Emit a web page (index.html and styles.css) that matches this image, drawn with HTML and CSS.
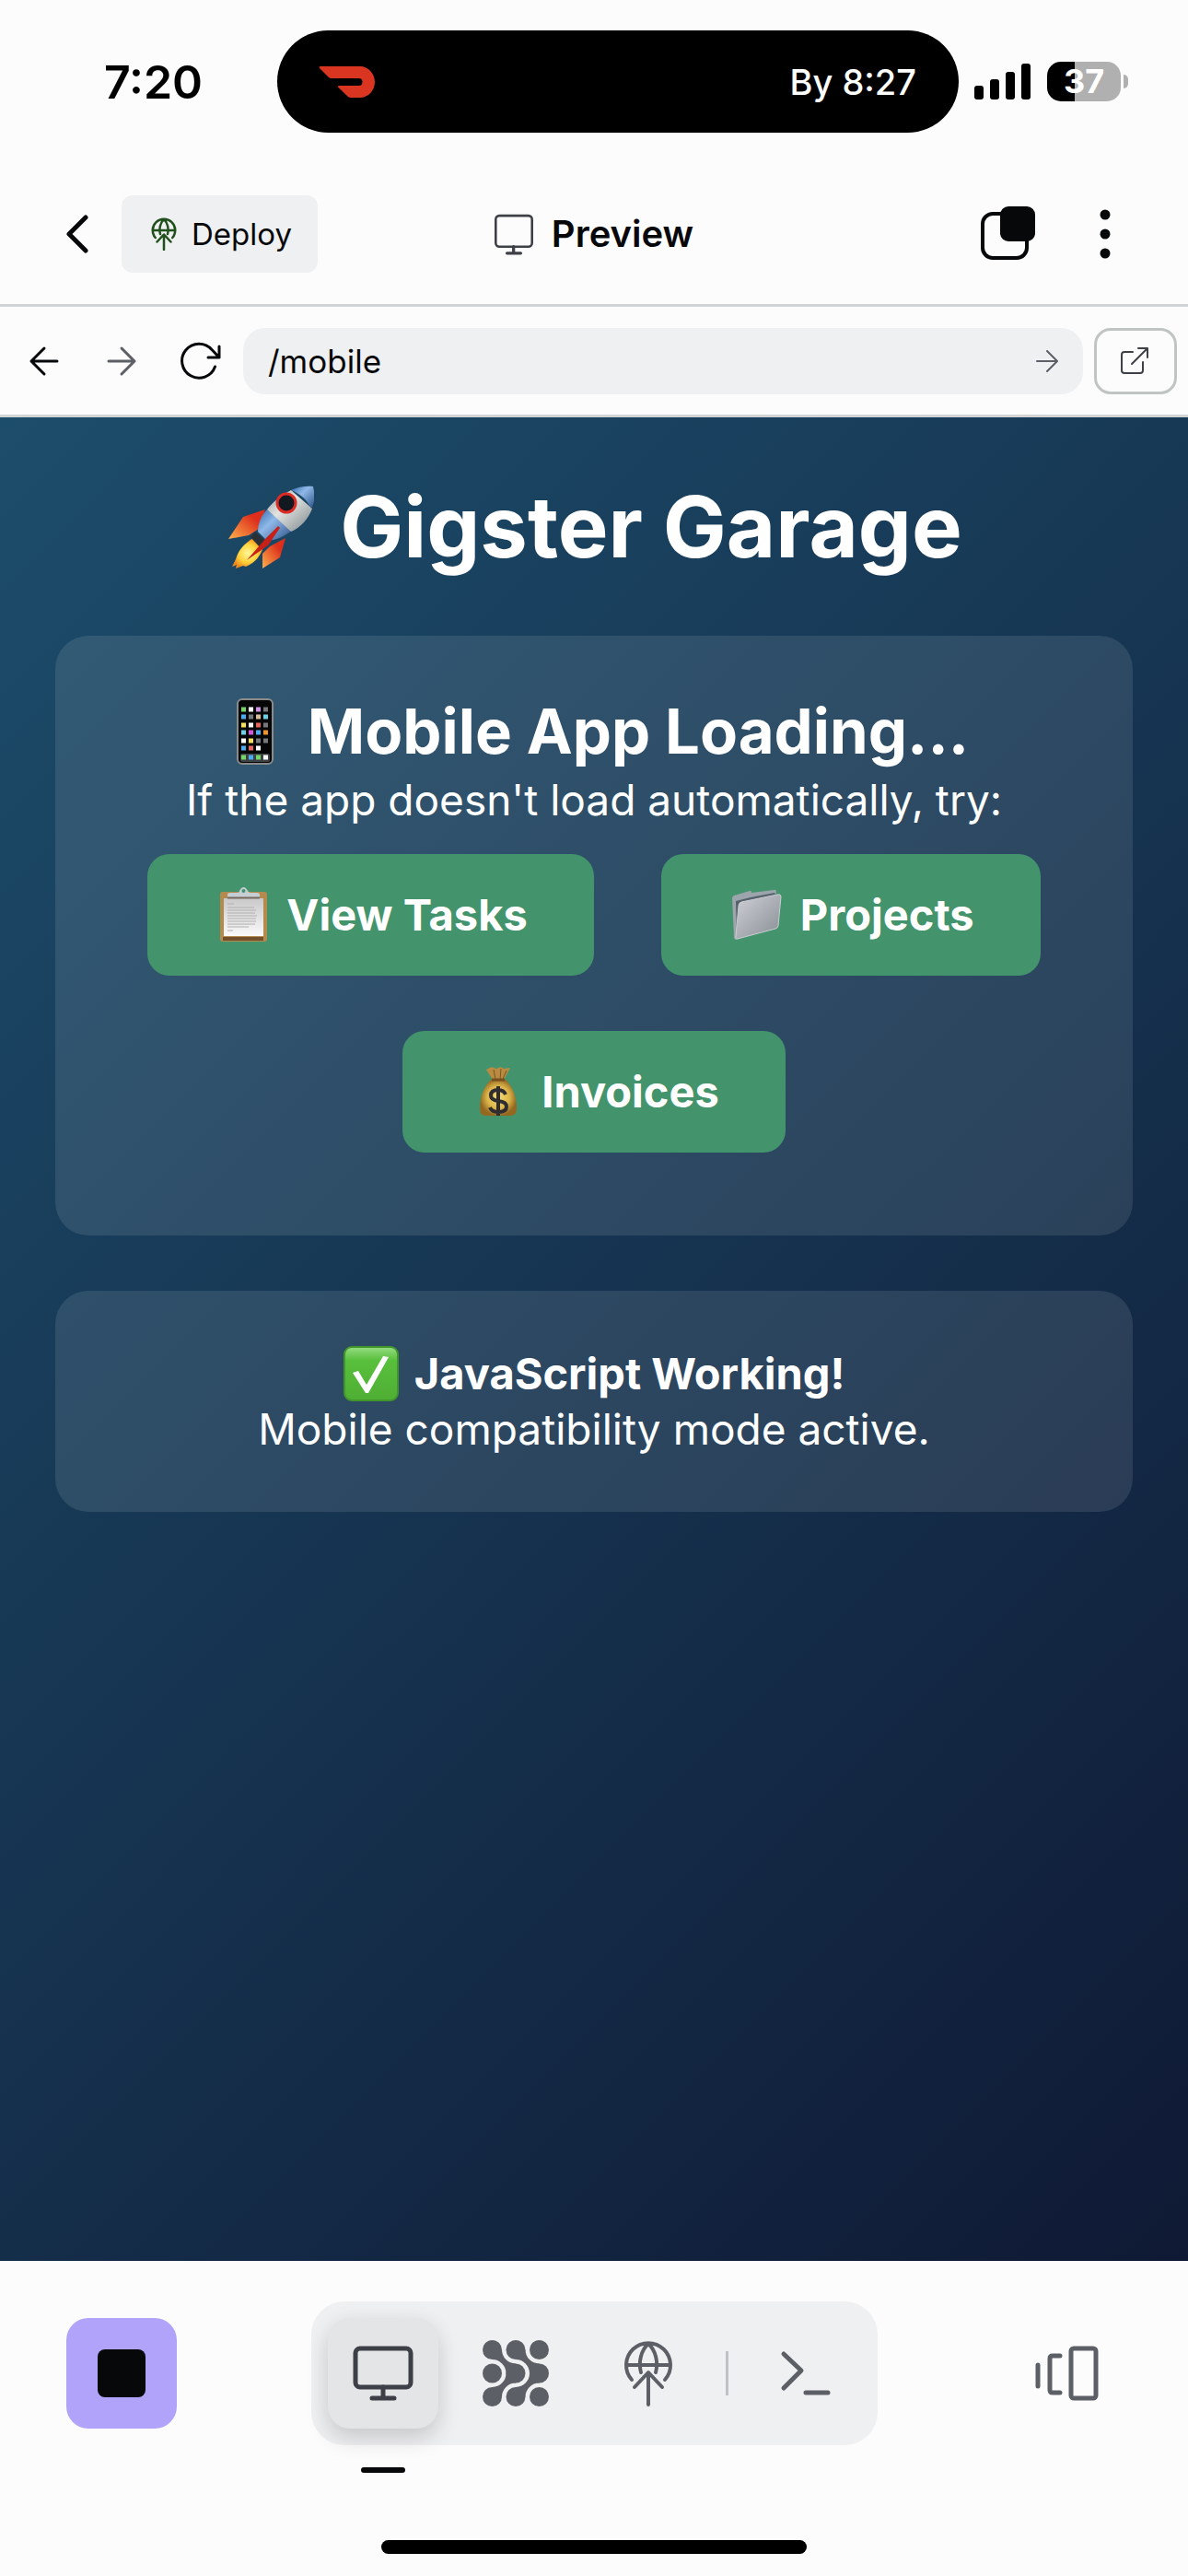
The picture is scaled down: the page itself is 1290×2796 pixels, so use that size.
FILE: index.html
```html
<!DOCTYPE html>
<html lang="en">
<head>
<meta charset="utf-8">
<meta name="viewport" content="width=device-width, initial-scale=1">
<title>Preview</title>
<link rel="stylesheet" href="styles.css">
</head>
<body>
<div class="screen">
  <div class="status">
    <time class="status-time">7:20</time>
    <div class="island">
      <svg width="62" height="34" viewBox="0 0 62 34" fill="#d93520" aria-hidden="true"><path d="M2 0H45C54 0 61 8 61 17S54 34 45 34H35Q33 34 32 33L21 22.500Q20 21 22 21H43.500A4 4 0 0 0 43.500 13H14Q12 13 11 12L1 2Q0 0 2 0Z"/></svg>
      <span>By 8:27</span>
    </div>
    <div class="status-right">
      <svg width="62" height="40" viewBox="0 0 62 40" aria-hidden="true"><rect y="24" width="10" height="15" rx="3"/><rect x="17" y="17" width="10" height="22" rx="3"/><rect x="34" y="9" width="10" height="30" rx="3"/><rect x="51" width="10" height="39" rx="3"/></svg>
      <span class="battery">37</span>
    </div>
  </div>

  <header class="topbar">
    <div class="topbar-side">
      <button class="icon-btn" aria-label="Back"><svg width="60" height="60" viewBox="0 0 60 60" class="ink"><path d="M39 12 21 30 39 48" stroke-width="5"/></svg></button>
      <button class="deploy">
        <svg width="36" height="36" viewBox="0 0 72 72" class="line green"><path d="M17.500 44A24.500 24.500 0 1 1 54.500 44M12 28H60M28 36C25 25 28 11 36 4 44 11 47 25 44 36M36 38V70M21 53 36 37 51 53" stroke-width="5"/></svg>
        Deploy
      </button>
    </div>
    <h1 class="title">
      <svg width="42" height="47" viewBox="4 0 65 72" class="line dark"><rect x="6" y="6" width="61" height="52" rx="6" stroke-width="4"/><path d="M36 58V68M25 69H48" stroke-width="5"/></svg>
      Preview
    </h1>
    <div class="topbar-side end">
      <button class="icon-btn" aria-label="Tabs"><svg width="66" height="66" viewBox="0 0 66 66" class="ink"><rect x="6" y="11" width="48" height="48" rx="11" stroke-width="4"/><rect x="25" y="3" width="38" height="38" rx="9" fill="#07080a" stroke="none"/></svg></button>
      <button class="icon-btn" aria-label="More"><svg width="60" height="60" viewBox="0 0 60 60" fill="#07080a"><circle cx="30" cy="9" r="5.500"/><circle cx="30" cy="30" r="5.500"/><circle cx="30" cy="51" r="5.500"/></svg></button>
    </div>
  </header>

  <div class="urlbar">
    <button class="icon-btn" aria-label="Go back"><svg width="36" height="36" viewBox="0 0 36 36" class="ink"><path d="M32 18H4M18 4 4 18 18 32" stroke-width="3"/></svg></button>
    <button class="icon-btn" aria-label="Go forward"><svg width="36" height="36" viewBox="0 0 36 36" class="line grey"><path d="M4 18H32M18 4 32 18 18 32" stroke-width="3"/></svg></button>
    <button class="icon-btn" aria-label="Reload"><svg width="48" height="48" viewBox="0 0 48 48" class="ink"><path d="M46 20 38 11.500A18.500 18.500 0 1 0 41.500 30M46 8V20H34" stroke-width="3"/></svg></button>
    <form class="address">
      <input type="text" value="/mobile" aria-label="Address">
      <button type="button" class="go" aria-label="Go"><svg width="24" height="28" viewBox="0 0 24 28" class="line grey"><path d="M1 14H22M12 3 23 14 12 25" stroke-width="2"/></svg></button>
    </form>
    <button class="open" aria-label="Open in new tab"><svg width="36" height="36" viewBox="0 0 36 36" class="line dark"><path d="M15 8H6Q3 8 3 11V28Q3 31 6 31H23Q26 31 26 28V19M14 21 31 4M21 4H31V14" stroke-width="2"/></svg></button>
  </div>

  <main class="preview">
    <h2 class="brand">
      <svg width="96" height="96" viewBox="-2 -3 96 96" aria-hidden="true">
        <defs>
          <linearGradient id="hull" x1="0" y1="0" x2="1" y2="1"><stop offset="0" stop-color="#8d9698"/><stop offset=".4" stop-color="#e2e4e2"/><stop offset="1" stop-color="#7b8588"/></linearGradient>
          <linearGradient id="blue" x1="0" y1="0" x2="1" y2="1"><stop offset="0" stop-color="#3469ad"/><stop offset=".4" stop-color="#8fb9e8"/><stop offset="1" stop-color="#2c4f87"/></linearGradient>
          <linearGradient id="fin" x1="1" y1="0" x2="0" y2="1"><stop offset=".3" stop-color="#dd2f1c"/><stop offset="1" stop-color="#ffb04a"/></linearGradient>
          <radialGradient id="fire"><stop offset="0" stop-color="#fff79a"/><stop offset=".6" stop-color="#ffd33b"/><stop offset="1" stop-color="#f28b1c"/></radialGradient>
        </defs>
        <path d="M41 26 17 34 1 58 23 54 34 47Z" fill="url(#fin)"/>
        <path d="M63 57 46 66 38 74 38 90 57 78Z" fill="url(#fin)"/>
        <path d="M28 57C17 64 12 70 9 80L5 88 10 86 9 90 17 87 20 88C30 84 36 76 39 67Z" fill="url(#fire)"/>
        <path d="M30 50 41 60 36 68 25 56Z" fill="#2b3036"/>
        <path d="M43 26C37 32 33 41 33 50L43 60C53 59 63 55 69 49Z" fill="url(#blue)"/>
        <path d="M43 26C50 17 58 11 69 5L92 25C88 36 79 46 69 50Z" fill="url(#hull)"/>
        <path d="M69 5C77 1 87 0 93 1 95 9 95 18 91 25 86 15 79 9 69 5Z" fill="url(#blue)"/>
        <circle cx="64" cy="19" r="10" fill="#111820" stroke="#dc2a24" stroke-width="3"/>
        <path d="M55 44 41 58 21 81 44 65 57 46Z" fill="#c62018"/>
      </svg>
      Gigster Garage
    </h2>

    <section class="card">
      <h3 class="card-title">
        <svg width="94" height="72" viewBox="-27 0 94 72" aria-hidden="true">
          <rect x="1" y="1" width="38" height="70" rx="5" fill="#060606" stroke="#8b8b8b" stroke-width="2"/>
          <rect x="4" y="60" width="32" height="9" rx="2" fill="#3d4145"/>
          <path d="M5 12h5M5 64h5M21 64h5" stroke="#74d765" stroke-width="5"/>
          <path d="M13 12h5M13 29h5M5 46h5M21 54h5M29 64h5" stroke="#fff" stroke-width="5"/>
          <path d="M21 12h5" stroke="#cf92e4" stroke-width="5"/>
          <path d="M29 12h5M29 46h5M29 29h5M13 20h5M21 46h5" stroke="#77787a" stroke-width="5"/>
          <path d="M5 20h5M5 54h5M21 37h5M13 64h5" stroke="#4eabf0" stroke-width="5"/>
          <path d="M21 20h5" stroke="#d8bf99" stroke-width="5"/>
          <path d="M29 20h5M5 37h5" stroke="#6ed0e4" stroke-width="5"/>
          <path d="M5 29h5M13 46h5" stroke="#f8df5d" stroke-width="5"/>
          <path d="M21 29h5M13 54h5" stroke="#e4665c" stroke-width="5"/>
          <path d="M13 37h5" stroke="#d157dd" stroke-width="5"/>
          <path d="M29 37h5" stroke="#ee942c" stroke-width="5"/>
        </svg>
        Mobile App Loading...
      </h3>
      <p>If the app doesn't load automatically, try:</p>
      <nav class="actions">
        <a href="#tasks" class="action">
          <svg width="63" height="60" viewBox="0 0 63 60" aria-hidden="true">
            <rect x="7" y="5" width="51" height="54" rx="3" fill="#b58a4e"/><path d="M10 54H54V58H10Z" fill="#73502c"/>
            <linearGradient id="sheet" x1="0" y1="0" x2="0" y2="1"><stop offset="0" stop-color="#c9c9c9"/><stop offset="1" stop-color="#fafafa"/></linearGradient>
            <path d="M11 12H54V53H11Z" fill="url(#sheet)"/>
            <path d="M15 18h7M15 22h29M15 25h31M15 28h30M15 31h32M15 34h31M15 37h31M15 40h30M15 43h23M15 47h6" stroke="#b0b0b0" stroke-width="1"/>
            <path d="M15 12V8Q15 6 18 6H26Q28 6 28 4 30 0 32.500 0T37 4Q38 6 40 6H47Q50 6 50 8V12Z" fill="#c5ced2"/><circle cx="32.500" cy="4" r="2" fill="#43946c"/><path d="M15 11.500H50" stroke="#776b61" stroke-width="2"/>
          </svg>
          View Tasks
        </a>
        <a href="#projects" class="action">
          <svg width="63" height="60" viewBox="0 0 63 60" aria-hidden="true">
            <linearGradient id="folder" x1="0" y1="0" x2="1" y2="1"><stop offset="0" stop-color="#cfd1d6"/><stop offset="1" stop-color="#888d95"/></linearGradient>
            <path d="M5 12Q5 10 7 9L24 4Q26 3 26 6L50 3Q53 2 53 6L10 56Q7 58 7 54Z" fill="#9ca4ac"/>
            <path d="M9 15 25 11 51 6 53 10 10 53Z" fill="#56616b"/>
            <path d="M12 20Q12 17 15 16L54 8Q58 7 58 10L55 42Q55 44 52 45L11 56Q8 57 9 53Z" fill="url(#folder)" stroke="#c8ccd0" stroke-width="1"/>
          </svg>
          Projects
        </a>
        <a href="#invoices" class="action">
          <svg width="63" height="60" viewBox="0 0 63 60" aria-hidden="true">
            <radialGradient id="bag"><stop offset="0" stop-color="#f3dc72"/><stop offset=".6" stop-color="#ddb64b"/><stop offset="1" stop-color="#946820"/></radialGradient>
            <path d="M19 6 25 3 30 5 35 3 38 5 45 4 38 17H26Z" fill="#b98b42"/><path d="M27 6 29 16M35 5 34 16M41 7 37 16" stroke="#7b541f" stroke-width="1"/>
            <path d="M25 16H39C48 24 52 36 52 48Q52 56 45 56H18Q12 56 12 48C12 36 16 24 25 16Z" fill="url(#bag)"/><path d="M25 17H39" stroke="#75501c" stroke-width="3"/>
            <path d="M40 33Q38 28 32 28 24 28 24 34 24 39 32 40 41 41 41 46 41 52 32 52 25 52 23 47M32 24V56" fill="none" stroke="#302d31" stroke-width="4"/>
          </svg>
          Invoices
        </a>
      </nav>
    </section>

    <section class="card">
      <strong class="ready">
        <svg width="61" height="60" viewBox="0 0 61 60" aria-hidden="true"><linearGradient id="tick" x1="0" y1="0" x2="0" y2="1"><stop offset="0" stop-color="#97dc82"/><stop offset=".25" stop-color="#58c03c"/><stop offset="1" stop-color="#4fae34"/></linearGradient><rect x="1" y="1" width="58" height="58" rx="8" fill="url(#tick)" stroke="#41952a" stroke-width="2"/><path d="M10 29 16 27 25 42 43 11 49 12 27 51 24 51Z" fill="#fff"/></svg>
        JavaScript Working!
      </strong>
      <p>Mobile compatibility mode active.</p>
    </section>
  </main>

  <footer class="dock">
    <button class="stop" aria-label="Stop"><svg width="54" height="54" viewBox="0 0 54 54"><rect x="1" y="1" width="52" height="52" rx="8" fill="#07080a"/></svg></button>
    <nav class="tools">
      <button class="tool active" aria-label="Preview"><svg width="72" height="72" viewBox="0 0 72 72" class="line dark"><rect x="6" y="9" width="60" height="42" rx="5" stroke-width="5"/><path d="M36 51V62M24 63H48" stroke-width="5"/></svg></button>
      <button class="tool" aria-label="Agent"><svg width="72" height="72" viewBox="0 0 72 72" fill="#5d5f66">
        <circle cx="10.500" cy="10.500" r="10.500"/><circle cx="36" cy="10.500" r="10.500"/><circle cx="61.500" cy="10.500" r="10.500"/>
        <circle cx="10.500" cy="36" r="10.500"/><circle cx="36" cy="36" r="10.500"/><circle cx="61.500" cy="36" r="10.500"/>
        <circle cx="10.500" cy="61.500" r="10.500"/><circle cx="36" cy="61.500" r="10.500"/><circle cx="61.500" cy="61.500" r="10.500"/>
        <path id="bend" d="M21 10.500A15 15 0 0 0 36 25.500V46.500A15 15 0 0 0 21 61.500L10.500 51A15 15 0 0 0 10.500 21Z"/><use href="#bend" x="25.500"/></svg></button>
      <button class="tool" aria-label="Deployments"><svg width="72" height="72" viewBox="0 0 72 72" class="line grey"><path d="M18 43A24 24 0 1 1 54 43M12 27H60M28 35C25 24 28 11 36 4 44 11 47 24 44 35M36 36V70M21 51 36 35 51 51" stroke-width="4"/></svg></button>
      <span class="divider"></span>
      <button class="tool" aria-label="Shell"><svg width="72" height="72" viewBox="0 0 72 72" class="line grey"><path d="M12 15 31 33 12 52M36 57H60" stroke-width="5"/></svg></button>
    </nav>
    <button class="panels" aria-label="Panels"><svg width="72" height="72" viewBox="0 0 72 72" class="line grey"><path d="M5 27V50M29 17H21Q18 17 18 20V54Q18 57 21 57H29" stroke-width="5"/><rect x="41" y="9" width="27" height="54" rx="3" stroke-width="5"/></svg></button>
    <span class="home"></span>
  </footer>
</div>
</body>
</html>
```

FILE: styles.css
```css
* { box-sizing: border-box; }

body {
  margin: 0;
  background: #fcfcfc;
  color: #07080a;
  font-family: Inter, "Liberation Sans", sans-serif;
}

button {
  display: flex;
  align-items: center;
  justify-content: center;
  padding: 0;
  border: 0;
  background: none;
  color: inherit;
  font: inherit;
}

svg { flex: none; }
h1, h2, h3, p { margin: 0; }

.ink, .line {
  fill: none;
  stroke: #07080a;
  stroke-linecap: round;
  stroke-linejoin: round;
}
.line.grey { stroke: #5d5f66; }
.line.dark { stroke: #3e4048; }
.line.green { stroke: #20501c; }

.screen {
  display: flex;
  flex-direction: column;
  min-height: 100vh;
}

/* Phone status bar */
.status {
  display: grid;
  grid-template-columns: 301fr 740fr 249fr;
  align-items: center;
  height: 177px;
}
.status-time {
  justify-self: center;
  padding-left: 32px;
  color: #000;
  font-size: 50px;
  font-weight: 600;
}
.island {
  display: flex;
  align-items: center;
  justify-content: space-between;
  height: 111px;
  padding: 0 46px 0 45px;
  border-radius: 56px;
  background: #000;
  color: #fff;
  font-size: 38px;
  font-weight: 500;
}
.status-right {
  display: flex;
  align-items: center;
  gap: 17px;
  padding-left: 17px;
}
.battery {
  position: relative;
  width: 80px;
  border-radius: 15px;
  background: linear-gradient(90deg, #000 37%, #b0b0b0 37%);
  color: #fff;
  font-size: 36px;
  font-weight: 700;
  line-height: 43px;
  text-align: center;
}
.battery::after {
  content: "";
  position: absolute;
  top: 14px;
  left: 83px;
  width: 5px;
  height: 15px;
  border-radius: 0 5px 5px 0;
  background: #b0b0b0;
}

/* App header */
.topbar {
  display: grid;
  grid-template-columns: 1fr auto 1fr;
  align-items: center;
  height: 156px;
  padding: 0 54px 0 48px;
  border-bottom: 3px solid #d2d3d4;
}
.topbar-side {
  display: flex;
  align-items: center;
  gap: 12px;
}
.topbar-side.end {
  justify-content: flex-end;
  gap: 34px;
}
.icon-btn {
  flex: none;
  width: 72px;
  height: 72px;
}
.deploy {
  gap: 12px;
  height: 84px;
  padding: 0 28px;
  border-radius: 12px;
  background: #eff0f2;
  font-size: 33px;
}
.title {
  display: flex;
  align-items: center;
  gap: 20px;
  margin-left: 6px;
  font-size: 40px;
  font-weight: 600;
}

.urlbar {
  display: flex;
  align-items: center;
  gap: 12px;
  height: 120px;
  padding: 0 12px;
  border-bottom: 3px solid #d2d3d4;
}
.address {
  display: flex;
  flex: 1;
  align-items: center;
  height: 72px;
  padding: 0 27px;
  border-radius: 24px;
  background: #eff0f2;
}
.address input {
  flex: 1;
  min-width: 0;
  padding: 0;
  border: 0;
  outline: 0;
  background: none;
  color: inherit;
  font: inherit;
  font-size: 35px;
}
.open {
  width: 90px;
  height: 72px;
  border: 3px solid #c0c4c3;
  border-radius: 18px;
}

/* Previewed page */
.preview {
  flex: 1;
  padding: 60px;
  background: linear-gradient(135deg, #1c4d6b, #0f1934);
  color: #fff;
  font-size: 46px;
  line-height: 60px;
  text-align: center;
}
.brand, .card-title, .ready {
  display: flex;
  align-items: center;
  justify-content: center;
}
.brand {
  gap: 28px;
  margin-bottom: 60px;
  font-size: 92px;
  line-height: 117px;
}
.card {
  margin-bottom: 60px;
  padding: 60px;
  border-radius: 36px;
  background: rgba(255, 255, 255, 0.1);
}
.card-title {
  gap: 10px;
  padding-right: 8px;
  font-size: 67px;
  line-height: 88px;
}
.actions {
  display: flex;
  flex-wrap: wrap;
  justify-content: center;
  gap: 60px 73px;
  margin: 29px 0 30px;
}
.action {
  display: flex;
  align-items: center;
  gap: 16px;
  height: 132px;
  padding: 0 72px;
  border-radius: 24px;
  background: #43946c;
  color: #fff;
  font-size: 47px;
  font-weight: 700;
  text-decoration: none;
}
.ready {
  gap: 16px;
  font-size: 47px;
  font-weight: 700;
}

/* Bottom dock */
.dock {
  display: grid;
  grid-template-rows: 156px 1fr;
  grid-template-columns: 1fr auto 1fr;
  align-items: center;
  height: 342px;
  padding: 44px 72px 24px;
}
.stop {
  width: 120px;
  height: 120px;
  border-radius: 24px;
  background: #b0a3f9;
}
.tools {
  display: flex;
  align-items: center;
  gap: 24px;
  height: 156px;
  padding: 18px;
  border-radius: 36px;
  background: #eff0f2;
}
.tool {
  position: relative;
  width: 120px;
  height: 120px;
  border-radius: 24px;
}
.tool.active {
  background: #e4e5e7;
  box-shadow: 0 12px 24px rgba(0, 0, 0, 0.14), 0 0 24px rgba(0, 0, 0, 0.04);
}
.tool.active::after {
  content: "";
  position: absolute;
  top: 162px;
  left: 36px;
  width: 48px;
  height: 6px;
  border-radius: 3px;
  background: #07080a;
}
.divider {
  width: 3px;
  height: 48px;
  background: #c0c1c5;
}
.panels {
  justify-self: end;
  width: 120px;
  height: 120px;
}
.home {
  grid-column: 1 / -1;
  align-self: end;
  justify-self: center;
  width: 462px;
  height: 15px;
  border-radius: 8px;
  background: #000;
}
```
